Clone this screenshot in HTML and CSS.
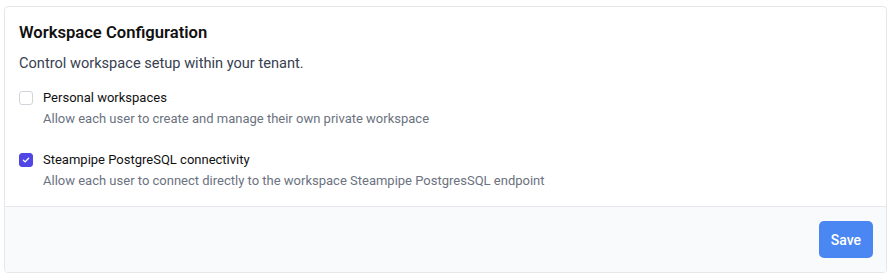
FILE: index.html
```html
<!DOCTYPE html>
<html lang="en">
<head>
    <meta charset="UTF-8">
    <title>Workspace Configuration</title>
    <link rel="stylesheet" href="styles.css">
</head>
<body>
    <div class="card">
        <div class="card-body">
            <h2>Workspace Configuration</h2>
            <p class="subtitle">Control workspace setup within your tenant.</p>
            <div class="option">
                <input type="checkbox" id="personal">
                <div>
                    <label for="personal">Personal workspaces</label>
                    <div class="option-help">Allow each user to create and manage their own private workspace</div>
                </div>
            </div>
            <div class="option">
                <input type="checkbox" id="steampipe" checked>
                <div>
                    <label for="steampipe">Steampipe PostgreSQL connectivity</label>
                    <div class="option-help">Allow each user to connect directly to the workspace Steampipe PostgresSQL endpoint</div>
                </div>
            </div>
        </div>
        <div class="card-footer">
            <button type="button">Save</button>
        </div>
    </div>
</body>
</html>
```

FILE: styles.css
```css
body {
    font-family: Roboto, 'Noto Sans', sans-serif;
    margin: 0;
    padding: 6px 4px;
    background-color: #fff;
    color: #111827;
}
.card {
    border: 1px solid #e5e7eb;
    border-radius: 4px;
    overflow: hidden;
}
.card-body {
    padding: 16px 14px 16px;
}
h2 {
    font-size: 16.6px;
    line-height: 20px;
    font-weight: 600;
    margin: 0 0 10px;
    color: #111;
}
.subtitle {
    font-size: 14.6px;
    line-height: 20px;
    color: #374151;
    margin: 0 0 16px;
}
.option {
    display: flex;
    gap: 10px;
}
.option + .option {
    margin-top: 23px;
}
.option input {
    appearance: none;
    width: 14px;
    height: 14px;
    margin: 2px 0 0;
    border: 1px solid #d1d5db;
    border-radius: 3px;
    background: #fff;
    flex-shrink: 0;
}
.option input:checked {
    background: #4f46e5 url("data:image/svg+xml,%3Csvg xmlns='http://www.w3.org/2000/svg' viewBox='0 0 16 16'%3E%3Cpath d='M4.5 8.2l2.3 2.3 4.7-4.9' fill='none' stroke='white' stroke-width='1.8' stroke-linecap='round' stroke-linejoin='round'/%3E%3C/svg%3E") center/100% no-repeat;
    border-color: #4f46e5;
}
.option label {
    display: block;
    font-size: 13px;
    line-height: 18px;
    font-weight: 400;
    color: #111;
    margin-bottom: 3px;
}
.option-help {
    font-size: 13px;
    line-height: 18px;
    color: #6b7280;
}
.card-footer {
    background-color: #f9fafb;
    border-top: 1px solid #e5e7eb;
    padding: 14px 13px 14px;
    display: flex;
    justify-content: flex-end;
}
.card-footer button {
    font-family: inherit;
    background-color: #4b87f2;
    color: #fff;
    border: none;
    border-radius: 5px;
    height: 37px;
    padding: 0 12px;
    font-size: 14px;
    font-weight: 500;
}
```
